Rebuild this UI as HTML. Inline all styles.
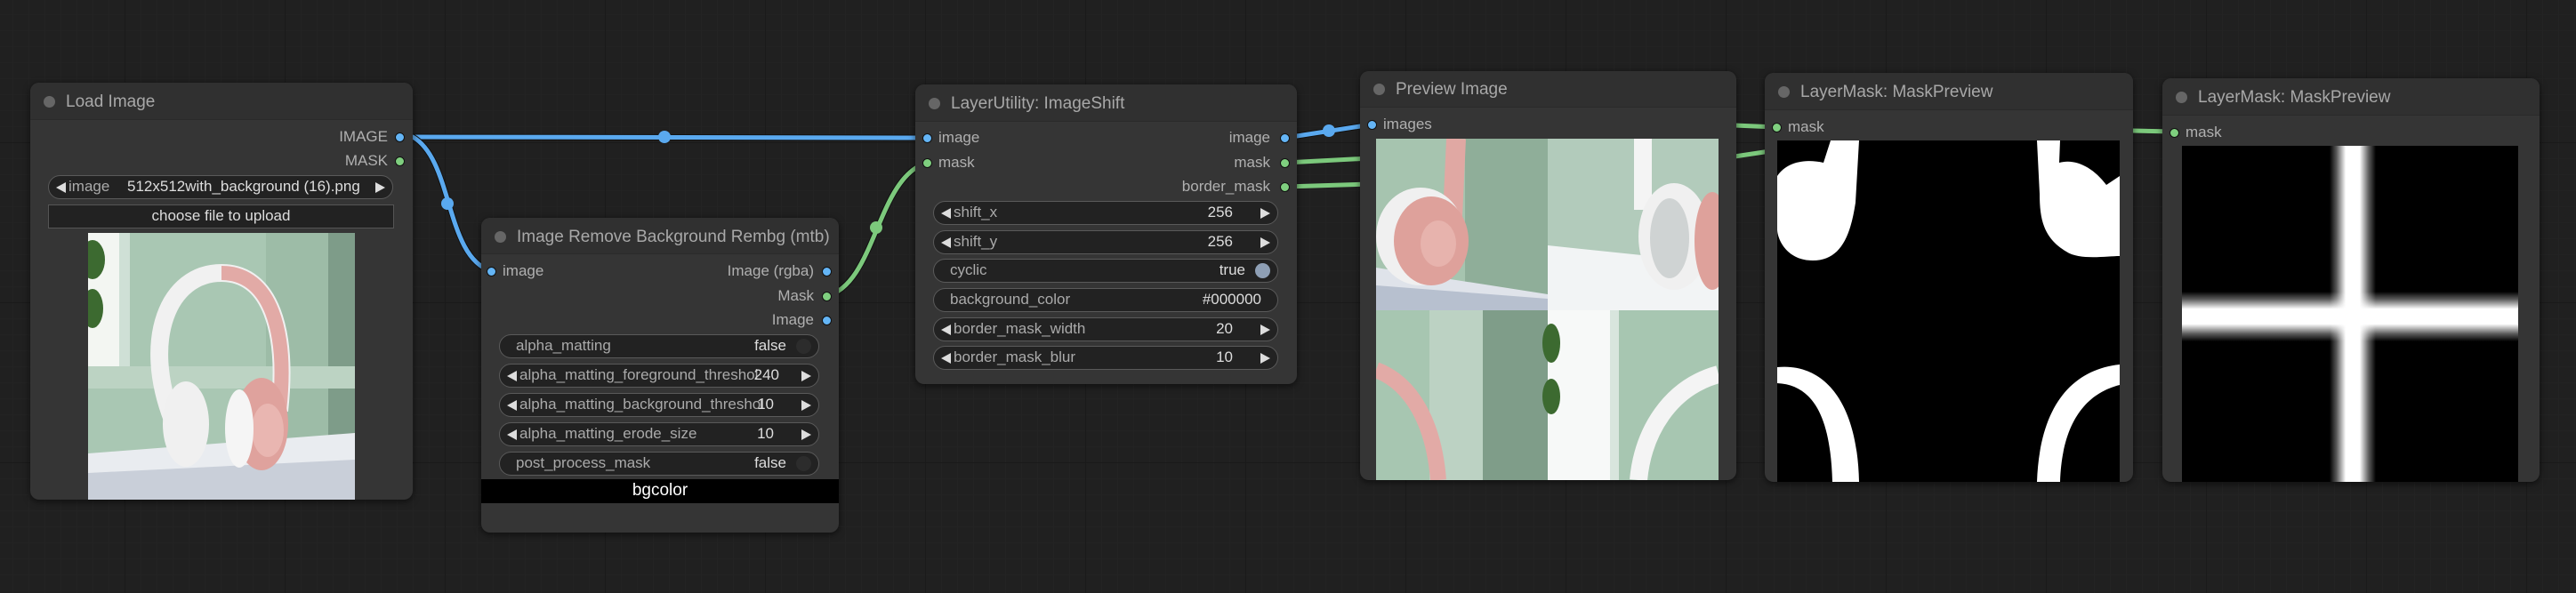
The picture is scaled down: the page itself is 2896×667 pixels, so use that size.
<!DOCTYPE html>
<html><head><meta charset="utf-8">
<style>
*{box-sizing:border-box;margin:0;padding:0}
body{width:2896px;height:667px;overflow:hidden;background:#202020;font-family:"Liberation Sans",sans-serif;position:relative;
background-image:linear-gradient(#1a1a1a 1px,transparent 1px),linear-gradient(90deg,#1a1a1a 1px,transparent 1px),linear-gradient(#232323 1px,transparent 1px),linear-gradient(90deg,#232323 1px,transparent 1px);
background-size:180px 180px,180px 180px,18px 18px,18px 18px;background-position:-40px -20px}
.node{position:absolute;background:#353535;border-radius:10px;box-shadow:0 2px 8px rgba(0,0,0,.6);overflow:hidden}
.title{position:absolute;left:0;right:0;top:0;background:#303030;border-bottom:1px solid #2a2a2a;color:#a8a8a8;font-size:19px}
.title .dot{position:absolute;width:13px;height:13px;border-radius:50%;background:#666;left:15px}
.title span{position:absolute;left:40px}
.lbl{position:absolute;font-size:17px;color:#b0b0b0;line-height:20px}
.s{position:absolute;width:11px;height:11px;border-radius:50%;border:1px solid #111}
.b{background:#64b5f6}.g{background:#7fcf7f}
.w{position:absolute;height:27px;background:#222;border:1.5px solid #5a5a5a;border-radius:14px;font-size:17px;color:#aaa;line-height:24px}
.w .n{position:absolute;left:22px}
.w .v{position:absolute;right:36px;color:#ddd}
.w .al{position:absolute;left:8px;top:7px;width:0;height:0;border-top:6px solid transparent;border-bottom:6px solid transparent;border-right:11px solid #ddd}
.w .ar{position:absolute;right:8px;top:7px;width:0;height:0;border-top:6px solid transparent;border-bottom:6px solid transparent;border-left:11px solid #ddd}
.w .t{position:absolute;right:8px;top:4px;width:17px;height:17px;border-radius:50%;background:#2c2c2c}
.w.nl .n{left:18px}
</style></head><body>

<svg style="position:absolute;left:0;top:0" width="2896" height="667">
<g fill="none" stroke-width="5" stroke-linecap="round">
<path d="M464 154 L1042 155" stroke="#111" stroke-width="7"/>
<path d="M464 154 L1042 155" stroke="#5aa9ef"/>
<path d="M464 154 C510 180,500 290,553 305" stroke="#111" stroke-width="7"/>
<path d="M464 154 C510 180,500 290,553 305" stroke="#5aa9ef"/>
<path d="M929 333 C985 320,985 200,1042 183" stroke="#111" stroke-width="7"/>
<path d="M929 333 C985 320,985 200,1042 183" stroke="#7cc97c"/>
<path d="M1445 155 L1542 140" stroke="#111" stroke-width="7"/>
<path d="M1445 155 L1542 140" stroke="#5aa9ef"/>
<path d="M1445 183 L1540 178" stroke="#7cc97c"/>
<path d="M1445 210 L1540 207" stroke="#7cc97c"/>
<path d="M1950 141 L1997 143" stroke="#7cc97c"/>
<path d="M1950 176 L1990 170" stroke="#7cc97c"/>
<path d="M2398 147 L2444 148" stroke="#7cc97c"/>
</g>
<circle cx="747" cy="154" r="7" fill="#5aa9ef"/>
<circle cx="503" cy="229" r="7" fill="#5aa9ef"/>
<circle cx="985" cy="256" r="7" fill="#7cc97c"/>
<circle cx="1494" cy="147" r="7" fill="#5aa9ef"/>
</svg>

<!-- Load Image -->
<div class="node" style="left:34px;top:93px;width:430px;height:469px">
 <div class="title" style="height:42px"><div class="dot" style="top:15px"></div><span style="top:11px">Load Image</span></div>
 <div class="lbl" style="right:28px;top:51px">IMAGE</div><div class="s b" style="right:9px;top:56px"></div>
 <div class="lbl" style="right:28px;top:78px">MASK</div><div class="s g" style="right:9px;top:83px"></div>
 <div class="w" style="left:20px;top:104px;width:388px"><div class="al"></div><span class="n" style="color:#aaa">image</span><span style="position:absolute;left:88px;color:#ddd">512x512with_background (16).png</span><div class="ar"></div></div>
 <div style="position:absolute;left:20px;top:137px;width:389px;height:27px;background:#222;border:1.5px solid #555;color:#ddd;font-size:17px;text-align:center;line-height:24px">choose file to upload</div>
 <svg style="position:absolute;left:65px;top:169px" width="300" height="300" viewBox="0 0 300 300">
  <rect width="300" height="300" fill="#a9c7b3"/>
  <rect x="0" y="0" width="40" height="170" fill="#f3f6f2"/><rect x="35" y="0" width="12" height="170" fill="#cfe0d6"/>
  <rect x="200" y="0" width="100" height="300" fill="#9dbca7"/><rect x="270" y="0" width="30" height="300" fill="#7e9c89"/>
  <rect x="0" y="150" width="300" height="25" fill="#bcd3c3"/>
  <ellipse cx="5" cy="30" rx="14" ry="22" fill="#3c6a30"/><ellipse cx="5" cy="85" rx="12" ry="22" fill="#3c6a30"/>
  <polygon points="0,248 300,225 300,300 0,300" fill="#e9ecf0"/><polygon points="0,270 300,255 300,300 0,300" fill="#c9cfd9"/>
  <path d="M95 210 C60 120,90 45,150 45 C205 45,225 110,215 200" fill="none" stroke="#f1f1f1" stroke-width="20"/>
  <path d="M150 45 C205 45,225 110,215 200" fill="none" stroke="#e2aaa6" stroke-width="16"/>
  <ellipse cx="110" cy="215" rx="26" ry="48" fill="#f0f0f0"/><ellipse cx="195" cy="215" rx="30" ry="52" fill="#dfa29d"/>
  <ellipse cx="202" cy="222" rx="18" ry="30" fill="#e9b6b1"/><ellipse cx="170" cy="220" rx="16" ry="44" fill="#f5f5f5"/>
 </svg>
</div>

<!-- Rembg -->
<div class="node" style="left:541px;top:245px;width:402px;height:354px">
 <div class="title" style="height:41px"><div class="dot" style="top:15px"></div><span style="top:11px">Image Remove Background Rembg (mtb)</span></div>
 <div class="s b" style="left:6px;top:55px"></div><div class="lbl" style="left:24px;top:50px">image</div>
 <div class="lbl" style="right:28px;top:50px">Image (rgba)</div><div class="s b" style="right:8px;top:55px"></div>
 <div class="lbl" style="right:28px;top:78px">Mask</div><div class="s g" style="right:8px;top:83px"></div>
 <div class="lbl" style="right:28px;top:105px">Image</div><div class="s b" style="right:8px;top:110px"></div>
 <div class="w nl" style="left:20px;top:131px;width:360px"><span class="n">alpha_matting</span><span class="v">false</span><div class="t"></div></div>
 <div class="w" style="left:20px;top:164px;width:360px"><div class="al"></div><span class="n">alpha_matting_foreground_threshol</span><span class="v" style="right:44px">240</span><div class="ar"></div></div>
 <div class="w" style="left:20px;top:197px;width:360px"><div class="al"></div><span class="n">alpha_matting_background_threshol</span><span class="v" style="right:50px">10</span><div class="ar"></div></div>
 <div class="w" style="left:20px;top:230px;width:360px"><div class="al"></div><span class="n">alpha_matting_erode_size</span><span class="v" style="right:50px">10</span><div class="ar"></div></div>
 <div class="w nl" style="left:20px;top:263px;width:360px"><span class="n">post_process_mask</span><span class="v">false</span><div class="t"></div></div>
 <div style="position:absolute;left:0;right:0;top:294px;height:27px;background:#000;color:#fff;font-size:19px;text-align:center;line-height:26px">bgcolor</div>
</div>

<!-- LayerUtility -->
<div class="node" style="left:1029px;top:95px;width:429px;height:337px">
 <div class="title" style="height:42px"><div class="dot" style="top:15px"></div><span style="top:11px">LayerUtility: ImageShift</span></div>
 <div class="s b" style="left:8px;top:55px"></div><div class="lbl" style="left:26px;top:50px">image</div>
 <div class="s g" style="left:8px;top:83px"></div><div class="lbl" style="left:26px;top:78px">mask</div>
 <div class="lbl" style="right:30px;top:50px">image</div><div class="s b" style="right:8px;top:55px"></div>
 <div class="lbl" style="right:30px;top:78px">mask</div><div class="s g" style="right:8px;top:83px"></div>
 <div class="lbl" style="right:30px;top:105px">border_mask</div><div class="s g" style="right:8px;top:110px"></div>
 <div class="w" style="left:20px;top:131px;width:388px"><div class="al"></div><span class="n">shift_x</span><span class="v" style="right:50px">256</span><div class="ar"></div></div>
 <div class="w" style="left:20px;top:164px;width:388px"><div class="al"></div><span class="n">shift_y</span><span class="v" style="right:50px">256</span><div class="ar"></div></div>
 <div class="w nl" style="left:20px;top:196px;width:388px"><span class="n">cyclic</span><span class="v">true</span><div class="t" style="background:#8e9fb5"></div></div>
 <div class="w nl" style="left:20px;top:229px;width:388px"><span class="n">background_color</span><span class="v" style="right:18px">#000000</span></div>
 <div class="w" style="left:20px;top:262px;width:388px"><div class="al"></div><span class="n">border_mask_width</span><span class="v" style="right:50px">20</span><div class="ar"></div></div>
 <div class="w" style="left:20px;top:294px;width:388px"><div class="al"></div><span class="n">border_mask_blur</span><span class="v" style="right:50px">10</span><div class="ar"></div></div>
</div>

<!-- Preview Image -->
<div class="node" style="left:1529px;top:80px;width:423px;height:460px">
 <div class="title" style="height:41px"><div class="dot" style="top:14px"></div><span style="top:10px">Preview Image</span></div>
 <div class="s b" style="left:8px;top:55px"></div><div class="lbl" style="left:26px;top:50px">images</div>
 <svg style="position:absolute;left:18px;top:76px" width="385" height="384" viewBox="0 0 385 384">
  <rect width="385" height="384" fill="#a6c4af"/>
  <rect x="100" y="0" width="93" height="190" fill="#8fae99"/>
  <polygon points="0,145 193,175 193,193 0,193" fill="#dfe3ea"/><polygon points="0,165 193,180 193,193 0,193" fill="#b7c0cf"/>
  <path d="M90 0 L85 110" stroke="#e0a8a3" stroke-width="22"/>
  <ellipse cx="50" cy="110" rx="50" ry="55" fill="#f0f0f0"/><ellipse cx="62" cy="115" rx="42" ry="50" fill="#dea19b"/><ellipse cx="70" cy="118" rx="20" ry="26" fill="#e7b3ad"/>
  <rect x="193" y="0" width="192" height="193" fill="#b2cbbb"/>
  <polygon points="193,120 385,140 385,193 193,193" fill="#f2f4f5"/>
  <path d="M300 0 L300 80" stroke="#f4f4f4" stroke-width="20"/>
  <ellipse cx="335" cy="110" rx="40" ry="60" fill="#f0f0f0"/><ellipse cx="330" cy="112" rx="22" ry="45" fill="#cfd3d3"/><ellipse cx="378" cy="115" rx="20" ry="55" fill="#dea19b"/>
  <rect x="0" y="193" width="193" height="191" fill="#a7c6b1"/><rect x="60" y="193" width="60" height="191" fill="#bcd2c3"/><rect x="120" y="193" width="73" height="191" fill="#7f9d89"/>
  <path d="M0 260 C40 275,65 320,70 384" fill="none" stroke="#e2aaa6" stroke-width="18"/>
  <rect x="193" y="193" width="192" height="191" fill="#a7c6b1"/><rect x="193" y="193" width="70" height="191" fill="#f7f9f8"/><rect x="263" y="193" width="10" height="191" fill="#d8e5dd"/>
  <ellipse cx="197" cy="230" rx="10" ry="22" fill="#3c6a30"/><ellipse cx="197" cy="290" rx="10" ry="20" fill="#3c6a30"/>
  <path d="M385 265 C330 280,300 330,295 384" fill="none" stroke="#f4f4f4" stroke-width="20"/>
 </svg>
</div>

<!-- MaskPreview 1 -->
<div class="node" style="left:1984px;top:82px;width:414px;height:460px">
 <div class="title" style="height:42px"><div class="dot" style="top:15px"></div><span style="top:11px">LayerMask: MaskPreview</span></div>
 <div class="s g" style="left:8px;top:56px"></div><div class="lbl" style="left:26px;top:51px">mask</div>
 <svg style="position:absolute;left:14px;top:76px" width="385" height="384" viewBox="0 0 385 384">
  <rect width="385" height="384" fill="#000"/>
  <g fill="#fff">
   <path d="M60 0 L92 0 L88 70 C82 110,70 135,40 135 C10 135,0 110,0 100 L0 40 C10 25,30 20,52 25 Z"/>
   <path d="M292 0 L318 0 L317 25 C335 20,355 30,370 50 L385 40 L385 130 C370 130,340 135,325 125 C300 110,295 90,295 60 Z"/>
   <path d="M0 255 C50 250,90 290,92 384 L62 384 C60 310,40 275,0 273 Z"/>
   <path d="M385 252 C330 258,295 300,292 384 L318 384 C320 320,345 285,385 275 Z"/>
  </g>
 </svg>
</div>

<!-- MaskPreview 2 -->
<div class="node" style="left:2431px;top:88px;width:424px;height:454px">
 <div class="title" style="height:42px"><div class="dot" style="top:15px"></div><span style="top:11px">LayerMask: MaskPreview</span></div>
 <div class="s g" style="left:8px;top:56px"></div><div class="lbl" style="left:26px;top:51px">mask</div>
 <div style="position:absolute;left:22px;top:76px;width:378px;height:378px;background:#000;overflow:hidden;isolation:isolate">
  <div style="position:absolute;left:166px;top:0;width:52px;height:378px;background:linear-gradient(90deg,rgba(255,255,255,0),rgba(255,255,255,.35) 15%,#fff 35%,#fff 65%,rgba(255,255,255,.35) 85%,rgba(255,255,255,0))"></div>
  <div style="position:absolute;left:0;top:164px;width:378px;height:56px;mix-blend-mode:lighten;background:linear-gradient(rgba(255,255,255,0),rgba(255,255,255,.35) 15%,#fff 35%,#fff 65%,rgba(255,255,255,.35) 85%,rgba(255,255,255,0))"></div>
 </div>
</div>
</body></html>
